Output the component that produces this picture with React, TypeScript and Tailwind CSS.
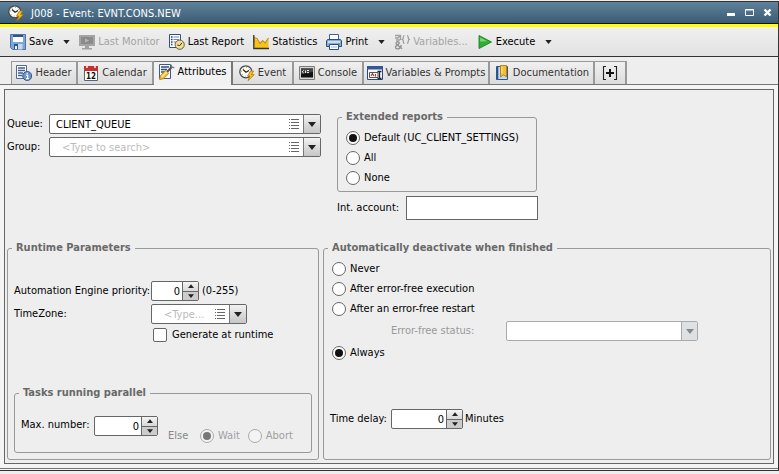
import type { ReactNode } from "react";

/* ---------- icons ---------- */

function Svg({ children, size = 16 }: { children: ReactNode; size?: number }) {
  return (
    <svg width={size} height={size} viewBox="0 0 16 16" className="shrink-0" aria-hidden="true">
      {children}
    </svg>
  );
}

function EventIcon({ size = 16 }: { size?: number }) {
  return (
    <Svg size={size}>
      <circle cx="6.8" cy="6.8" r="6" fill="#fdfcf6" stroke="#4a4a4a" strokeWidth="1.3" />
      <circle cx="6.8" cy="6.8" r="4.4" fill="none" stroke="#8f8a78" strokeWidth="1" strokeDasharray="1 2.4" />
      <path d="M4 4.5L7 7.2L10 5.4" fill="none" stroke="#222" strokeWidth="1.2" />
      <path d="M11.5 6L8.5 11H11L9 15.7L15.3 9.6H12.4L14.6 6Z" fill="#fbc21c" stroke="#b7760a" strokeWidth=".8" />
    </Svg>
  );
}

function SaveIcon() {
  return (
    <Svg>
      <path d="M.5 .5H15.5V15.5H2.5L.5 13.5Z" fill="#7ba6d6" stroke="#4a74a8" />
      <path d="M3 1H13V8H3Z" fill="#fff" />
      <path d="M3 1H13V3H3Z" fill="#2f5688" />
      <path d="M4 10H12.5V15.5H4Z" fill="#c8d9ec" />
      <path d="M4 10H8V15.5H4Z" fill="#2f5688" />
      <path d="M5 12H7V15H5Z" fill="#eef4fa" />
    </Svg>
  );
}

function MonitorIcon() {
  return (
    <Svg>
      <path d="M0 1H16V12H0Z" fill="#a4a4a4" />
      <path d="M2 3H14V10H2Z" fill="#8b8b8b" />
      <path d="M5.5 3.5L11 6.5L5.5 9.5Z" fill="#b4b4b4" stroke="#777" strokeWidth=".6" />
      <path d="M6 12H10V14H13V15.5H3V14H6Z" fill="#a0a0a0" />
    </Svg>
  );
}

function ReportIcon() {
  return (
    <Svg>
      <path d="M.5 .5H11.5V13.5H.5Z" fill="#fff" stroke="#34517f" />
      <path d="M2 3H3.5M2 5.5H3.5M2 8H3.5M2 10.5H3.5" stroke="#1c3e78" strokeWidth="1.3" />
      <path d="M4.5 3H10M4.5 5.5H10M4.5 8H7" stroke="#6e88b4" strokeWidth="1.2" />
      <circle cx="10.7" cy="10.7" r="4.6" fill="#f3dc94" stroke="#62603f" />
      <path d="M8.3 11L10.7 11.6L13 8.8" fill="none" stroke="#333" />
    </Svg>
  );
}

function StatsIcon() {
  return (
    <Svg>
      <path d="M1 14V4L4 6L7 8.5L9 7L12 9L15.5 4V14Z" fill="#f5c21f" />
      <path d="M1 9V3.5L4 4.5L7 9.5L9.5 6.5L12 9L15.5 4" fill="none" stroke="#c58a14" strokeWidth="1.1" />
      <path d="M.8 1V14.5H16" fill="none" stroke="#3b3520" strokeWidth="1.3" />
    </Svg>
  );
}

function PrintIcon() {
  return (
    <Svg>
      <path d="M3.5 .5H12.5V6.5H3.5Z" fill="#fff" stroke="#3d6596" />
      <path d="M1.5 5.5H14.5L15.5 7V12.5H.5V7Z" fill="#8caed4" stroke="#2a4f80" />
      <path d="M2 8H14" stroke="#dce9f5" strokeWidth="1.6" />
      <path d="M12 10H14" stroke="#49b14c" strokeWidth="1.4" />
      <path d="M3.5 10.5H12.5V15.5H3.5Z" fill="#fff" stroke="#2a4f80" />
      <path d="M5 13H11" stroke="#9db6d2" />
    </Svg>
  );
}

function VariablesIcon() {
  return (
    <Svg>
      <path d="M1 1.5H6M1 4H4L7 1M6.5 1V6M2 6L6 6" fill="none" stroke="#a0a0a0" strokeWidth="1.3" />
      <path d="M10.5 1.5C8.6 1.5 10 5 8.3 5.5C10 6 8.6 9.5 10.5 9.5M13 1.5C14.9 1.5 13.5 5 15.2 5.5C13.5 6 14.9 9.5 13 9.5" fill="none" stroke="#9a9a9a" strokeWidth="1.2" />
      <path d="M8 14.8L2.5 10.2C1.6 9 2.4 7.6 3.8 7.7C5.4 7.8 5.6 9.5 4.4 10.3L2.4 11.6C.6 13 1.5 14.9 3.4 14.9C5.6 14.9 6.8 13.5 7.3 11" fill="none" stroke="#929292" strokeWidth="1.4" />
    </Svg>
  );
}

function ExecuteIcon() {
  return (
    <Svg>
      <path d="M2 1.5L14.5 8L2 14.5Z" fill="#2fae36" stroke="#1b8422" strokeWidth=".9" />
      <path d="M3.2 3.6L10 7.2L3.2 7.6Z" fill="#7ed67c" />
    </Svg>
  );
}

function HeaderIcon() {
  return (
    <Svg>
      <path d="M.5 .5H10.5V13.5H.5Z" fill="#fff" stroke="#51688f" />
      <path d="M2 3H9M2 5.5H9M2 8H7M2 10.5H6" stroke="#3e5c8e" strokeWidth="1.3" />
      <circle cx="11.2" cy="11" r="4.5" fill="#6f96c6" stroke="#31578a" />
      <path d="M11.2 7.8V9.2M10.2 10.4H11.6V13.4M10 13.6H12.8" stroke="#fff" strokeWidth="1.2" fill="none" />
    </Svg>
  );
}

function CalendarIcon() {
  return (
    <Svg>
      <path d="M1.5 1.5H14.5V15.5H1.5Z" fill="#fff" stroke="#55627c" />
      <path d="M1 1H15V6H1Z" fill="#c9302c" />
      <path d="M4 0V3M12 0V3" stroke="#eee" strokeWidth="1.6" />
      <text x="8" y="13.8" textAnchor="middle" fontFamily="DejaVu Sans Condensed, sans-serif" fontSize="8" fontWeight="700" fill="#111">12</text>
    </Svg>
  );
}

function AttributesIcon() {
  return (
    <Svg>
      <path d="M.5 .5H11.5V14.5H.5Z" fill="#fff" stroke="#41598a" />
      <path d="M2 3H10M2 5.5H8M2 8H6" stroke="#2d4c84" strokeWidth="1.4" />
      <path d="M8 8L13 2.8" stroke="#555" strokeWidth="2.2" />
      <path d="M12.3 .8L12.8 3.2L15.4 3.6" fill="none" stroke="#777" strokeWidth="1.3" />
      <path d="M.6 15.6L1.4 11.6L6.6 6.4L9.8 9.4L4.6 14.8Z" fill="#f7bf2c" stroke="#b07912" strokeWidth=".8" />
      <path d="M2.8 13L7.8 8" stroke="#ffe694" strokeWidth="1.4" />
    </Svg>
  );
}

function ConsoleIcon() {
  return (
    <Svg>
      <path d="M.5 1.5H15.5V14.5H.5Z" fill="#d6d6d6" stroke="#7b7b7b" />
      <path d="M2 3.5H14V12.5H2Z" fill="#111" />
      <path d="M2 3.5H14V7L2 9Z" fill="#444" />
      <path d="M4.7 5.3L3.2 6.8L4.7 8M6.6 5.4V8M8 5.5H10M8 7.6H10" stroke="#fff" fill="none" strokeWidth=".9" />
    </Svg>
  );
}

function PromptsIcon() {
  return (
    <Svg>
      <path d="M.5 1.5H15.5V14.5H.5Z" fill="#f4f7fb" stroke="#274a85" />
      <path d="M0 1H16V4.5H0Z" fill="#31589a" />
      <path d="M2.5 7.5H11V12.5H2.5Z" fill="#fff" stroke="#555" />
      <path d="M4 11L5.5 8.6L7 11M8.5 9V11.6" stroke="#c22" fill="none" strokeWidth="1.1" />
      <path d="M10.5 6.5H14.5M12.5 6.5V13.5M10.5 13.5H14.5" stroke="#222" strokeWidth="1.3" />
    </Svg>
  );
}

function DocIcon() {
  return (
    <Svg>
      <path d="M2.5 1.5H13.5V14.5H2.5Z" fill="#c7d8ee" stroke="#2d5492" />
      <path d="M3.5 1V15" stroke="#2d5492" strokeWidth="1.6" />
      <path d="M6.5 .5H12.5V12L9.5 9.8L6.5 12Z" fill="#f7bd2e" stroke="#b47a13" strokeWidth=".9" />
      <path d="M8 1.5V8.5" stroke="#ffe79a" />
    </Svg>
  );
}

function AddTabIcon() {
  return (
    <Svg>
      <path d="M4 1.5H1.5V14.5H4M12 1.5H14.5V14.5H12" fill="none" stroke="#222" strokeWidth="1.1" />
      <path d="M8 4V12M4 8H12" stroke="#111" strokeWidth="2" />
    </Svg>
  );
}

function Caret({ className }: { className: string }) {
  return (
    <svg width="8" height="5" viewBox="0 0 8 5" className={className} aria-hidden="true">
      <path d="M0 0H8L4 5Z" fill="currentColor" />
    </svg>
  );
}

function ListIcon() {
  return (
    <svg width="10" height="11" viewBox="0 0 10 11" aria-hidden="true">
      <path d="M0 .5H1M0 3.5H1M0 6.5H1M0 9.5H1M2 .5H10M2 3.5H10M2 6.5H10M2 9.5H10" stroke="#666" />
    </svg>
  );
}

/* ---------- controls ---------- */

function Combo({ id, value, placeholder, className }: { id: string; value?: string; placeholder?: string; className: string }) {
  return (
    <div className={`flex h-5 overflow-hidden rounded-xs border border-[#666] bg-white ${className}`}>
      <input
        id={id}
        defaultValue={value}
        placeholder={placeholder}
        className={`min-w-0 flex-1 text-ellipsis bg-transparent pt-px outline-none placeholder:text-[#bbb] ${value ? "pl-1.5" : "pl-3"}`}
      />
      <button type="button" aria-label="Show list" className="flex w-[18px] items-center justify-center">
        <ListIcon />
      </button>
      <button
        type="button"
        aria-label="Open"
        className="flex w-[17px] items-center justify-center border-l border-[#777] bg-linear-to-b from-[#f2f2f2] to-[#c6c6c6] text-[#222]"
      >
        <Caret className="" />
      </button>
    </div>
  );
}

function Spinner({ id, className }: { id: string; className: string }) {
  return (
    <div className={`flex h-5 rounded-xs border border-[#666] bg-white ${className}`}>
      <input id={id} defaultValue="0" inputMode="numeric" className="min-w-0 flex-1 bg-transparent pr-0.5 pt-px text-right outline-none" />
      <div className="flex w-4 flex-col border-l border-[#666] text-[#222]">
        <button type="button" aria-label="Increase" className="flex flex-1 items-center justify-center border-b border-[#666] bg-linear-to-b from-[#f4f4f4] to-[#d8d8d8]">
          <Caret className="h-1 w-1.5 rotate-180" />
        </button>
        <button type="button" aria-label="Decrease" className="flex flex-1 items-center justify-center bg-[#ccc]">
          <Caret className="h-1 w-1.5" />
        </button>
      </div>
    </div>
  );
}

function Radio({ name, label, checked, disabled }: { name: string; label: string; checked?: boolean; disabled?: boolean }) {
  return (
    <label className={`flex h-5 items-center gap-1 ${disabled ? "text-[#a0a0a0]" : ""}`}>
      <input
        type="radio"
        name={name}
        defaultChecked={checked}
        disabled={disabled}
        className="grid size-3.5 shrink-0 appearance-none place-items-center rounded-full border border-[#666] bg-white before:hidden before:size-2 before:rounded-full before:bg-[#111] checked:before:block disabled:border-[#aaa] disabled:bg-[#f4f4f4] disabled:before:bg-[#777]"
      />
      {label}
    </label>
  );
}

function Group({ title, className = "", children }: { title: string; className?: string; children: ReactNode }) {
  return (
    <fieldset className={`min-w-0 rounded-[3px] border border-[#999] ${className}`}>
      <legend className="ml-1 px-1 font-bold leading-[14px] text-[#696969]">{title}</legend>
      {children}
    </fieldset>
  );
}

function Tool({ icon, label, disabled, menu }: { icon: ReactNode; label: string; disabled?: boolean; menu?: boolean }) {
  return (
    <div className="flex items-center">
      <button type="button" disabled={disabled} className="flex items-center gap-[3px] whitespace-nowrap disabled:text-[#a4a4a4]">
        {icon}
        {label}
      </button>
      {menu && (
        <button type="button" aria-label={`${label} menu`} className="ml-2.5 flex h-4 w-[7px] items-center text-[#222]">
          <Caret className="h-1 w-[7px]" />
        </button>
      )}
    </div>
  );
}

function Tab({ icon, label, active, width }: { icon: ReactNode; label?: string; active?: boolean; width: string }) {
  return (
    <button
      type="button"
      role="tab"
      aria-selected={!!active}
      aria-label={label ?? "Add tab"}
      className={`flex shrink-0 items-center justify-center gap-[3px] whitespace-nowrap border-t ${width} ${
        active
          ? "-mb-px border-r-2 border-[#777] bg-[#f2f2f2] pb-1 text-black"
          : "border-r-2 border-[#999] bg-linear-to-b from-[#f0f0f0] to-[#dcdcdc] text-[#333] first:border-l"
      }`}
    >
      {icon}
      {label}
    </button>
  );
}

/* ---------- window ---------- */

export default function App() {
  return (
    <div className="flex min-h-screen flex-col bg-[#eee] pb-[3px] pt-px font-['DejaVu_Sans_Condensed','DejaVu_Sans',sans-serif] text-[11px] leading-[14px] text-black">
      <div className="flex flex-1 flex-col border-y border-r border-[#333] bg-[#f4f4f4] pb-px">
        <header className="flex h-[22px] items-center border-b border-[#111] bg-linear-to-b from-[#5f8199] to-[#3a5c76] pl-2 pr-1.5 text-white">
          <EventIcon />
          <h1 className="ml-[7px] flex-1 pt-0.5">J008 - Event: EVNT.CONS.NEW</h1>
          <div className="flex items-center gap-[9px]">
            <button type="button" aria-label="Minimize" className="size-[9px]">
              <svg width="9" height="9" viewBox="0 0 9 9"><path d="M0 5H8V8H0Z" fill="#fff" /></svg>
            </button>
            <button type="button" aria-label="Maximize" className="size-[9px]">
              <svg width="9" height="9" viewBox="0 0 9 9"><path d="M.5 1.5H8.5V7.5H.5ZM0 2H9" fill="none" stroke="#fff" /></svg>
            </button>
            <button type="button" aria-label="Close" className="size-[9px]">
              <svg width="9" height="9" viewBox="0 0 9 9"><path d="M1.5 1.5L7.5 7.5M7.5 1.5L1.5 7.5" stroke="#fff" strokeWidth="2.4" /></svg>
            </button>
          </div>
        </header>

        <div role="toolbar" className="flex h-[33px] items-center gap-[9px] border-b border-t-[3px] border-b-[#333] border-t-[#ff0] bg-linear-to-b from-[#f0f0f0] to-[#e2e2e2] pl-2.5">
          <Tool icon={<SaveIcon />} label="Save" menu />
          <Tool icon={<MonitorIcon />} label="Last Monitor" disabled />
          <Tool icon={<ReportIcon />} label="Last Report" />
          <Tool icon={<StatsIcon />} label="Statistics" />
          <Tool icon={<PrintIcon />} label="Print" menu />
          <Tool icon={<VariablesIcon />} label="Variables..." disabled />
          <Tool icon={<ExecuteIcon />} label="Execute" menu />
        </div>

        <div role="tablist" className="flex h-7 border-b border-[#777] bg-[#eee] pl-[11px] pt-1">
          <Tab icon={<HeaderIcon />} label="Header" width="w-[67px]" />
          <Tab icon={<CalendarIcon />} label="Calendar" width="w-[76px]" />
          <Tab icon={<AttributesIcon />} label="Attributes" width="w-[79px]" active />
          <Tab icon={<EventIcon />} label="Event" width="w-[61px]" />
          <Tab icon={<ConsoleIcon />} label="Console" width="w-[70px]" />
          <Tab icon={<PromptsIcon />} label="Variables & Prompts" width="w-[126px]" />
          <Tab icon={<DocIcon />} label="Documentation" width="w-[105px]" />
          <Tab icon={<AddTabIcon />} width="w-8" />
        </div>

        <div className="flex flex-1 flex-col border-b border-[#777] p-1">
          <main className="flex flex-1 flex-col border border-[#666] bg-[#eee] px-0.5 pb-[3px] pt-5">
            <div className="flex gap-4">
              <div className="grid h-fit grid-cols-[42px_272px] items-center gap-y-[3px] pt-1">
                <label htmlFor="queue">Queue:</label>
                <Combo id="queue" value="CLIENT_QUEUE" className="w-full" />
                <label htmlFor="group">Group:</label>
                <Combo id="group" placeholder="<Type to search>" className="w-full" />
              </div>
              <div>
                <Group title="Extended reports" className="w-[200px]">
                  <div className="flex flex-col pb-[3px] pl-2 pt-1">
                    <Radio name="reports" label="Default (UC_CLIENT_SETTINGS)" checked />
                    <Radio name="reports" label="All" />
                    <Radio name="reports" label="None" />
                  </div>
                </Group>
                <div className="mt-1 flex items-center">
                  <label htmlFor="account" className="w-[69px]">Int. account:</label>
                  <input id="account" className="h-6 w-[132px] border border-[#666] bg-white px-1 outline-none" />
                </div>
              </div>
            </div>

            <div className="mt-[21px] grid flex-1 grid-cols-[312fr_448fr] gap-1">
              <Group title="Runtime Parameters">
                <div className="flex h-full flex-col justify-between px-1.5 pb-1.5">
                  <div className="grid grid-cols-[137px_1fr] items-center gap-y-[3px] pt-[26px]">
                    <label htmlFor="priority">Automation Engine priority:</label>
                    <div className="flex items-center gap-[3px]">
                      <Spinner id="priority" className="w-12" />
                      (0-255)
                    </div>
                    <label htmlFor="timezone">TimeZone:</label>
                    <Combo id="timezone" placeholder="<Type..." className="w-24" />
                    <label className="col-start-2 flex items-center gap-[5px] pl-0.5 pt-px">
                      <input type="checkbox" className="size-3.5 appearance-none rounded-xs border border-[#666] bg-white checked:bg-[#555]" />
                      Generate at runtime
                    </label>
                  </div>
                  <Group title="Tasks running parallel">
                    <div className="flex items-start pb-1.5 pl-1.5 pt-4">
                      <label htmlFor="max" className="w-[73px] pt-0.5">Max. number:</label>
                      <Spinner id="max" className="w-16" />
                      <div className="ml-2.5 flex items-center gap-2 pt-2.5 text-[#888]">
                        <span className="w-6">Else</span>
                        <Radio name="else" label="Wait" checked disabled />
                        <Radio name="else" label="Abort" disabled />
                      </div>
                    </div>
                  </Group>
                </div>
              </Group>

              <Group title="Automatically deactivate when finished">
                <div className="flex flex-col pl-1.5 pt-1">
                  <div className="flex flex-col pl-0.5">
                    <Radio name="deactivate" label="Never" />
                    <Radio name="deactivate" label="After error-free execution" />
                    <Radio name="deactivate" label="After an error-free restart" />
                    <div className="my-0.5 flex items-center pl-[59px] text-[#999]">
                      <label htmlFor="status" className="w-[115px]">Error-free status:</label>
                      <div className="relative">
                        <select id="status" disabled className="block h-5 w-48 appearance-none rounded-xs border border-[#aaa] bg-white opacity-100" />
                        <span className="pointer-events-none absolute inset-y-px right-px flex w-4 items-center justify-center border-l border-[#aaa] bg-[#dde1e4] text-[#888]">
                          <Caret className="" />
                        </span>
                      </div>
                    </div>
                    <Radio name="deactivate" label="Always" checked />
                  </div>
                  <div className="mt-[46px] flex items-center">
                    <label htmlFor="delay" className="w-[61px]">Time delay:</label>
                    <Spinner id="delay" className="w-[72px]" />
                    <span className="ml-0.5">Minutes</span>
                  </div>
                </div>
              </Group>
            </div>
          </main>
        </div>
      </div>
    </div>
  );
}
